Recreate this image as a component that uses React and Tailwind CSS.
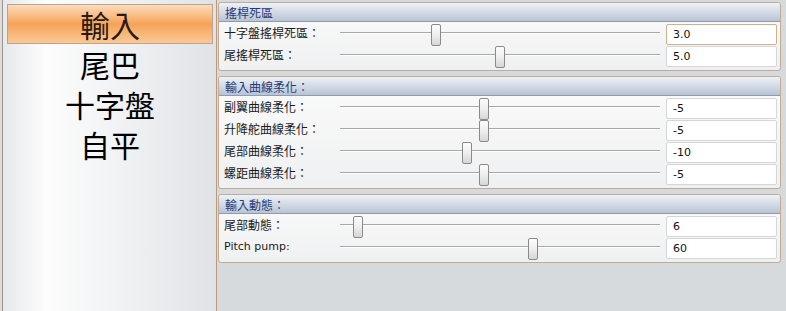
import React from "react";

const cjk = { fontFamily: '"Noto Sans CJK TC", "Noto Sans", sans-serif' };
const latin = { fontFamily: '"DejaVu Sans", "Noto Sans CJK TC", sans-serif' };

function Slider({ pos }) {
  return (
    <div className="relative h-[22px]">
      <div className="absolute left-0 right-0 top-[8px] h-[2px] border-t border-[#a8a8a8] bg-[#ffffff]" />
      <div
        className="absolute top-0 h-[22px] w-[10px] rounded-[2px] border border-[#8a8a8a] bg-gradient-to-b from-[#fdfdfd] via-[#eeeeee] to-[#d6d6d6]"
        style={{ left: pos - 5 }}
      />
    </div>
  );
}

function Row({ label, pos, value, latinLabel, focused }) {
  return (
    <div className="grid h-[22px] grid-cols-[110px_320px_111px] gap-x-[6px] items-start">
      <div
        className="text-[12px] leading-[17px] text-[#1a1a1a] whitespace-nowrap"
        style={latinLabel ? { fontFamily: '"DejaVu Sans", sans-serif', fontSize: 11 } : cjk}
      >
        {label}
      </div>
      <Slider pos={pos} />
      <div
        className={`h-[21px] rounded-[2px] border bg-white pl-[6px] text-[11px] leading-[19px] text-[#111] ${
          focused ? "border-[#cfb08e]" : "border-[#d4d6d9]"
        }`}
        style={latin}
      >
        {value}
      </div>
    </div>
  );
}

function Group({ title, rows }) {
  return (
    <div className="rounded-[3px] border border-[#c3aa92] bg-gradient-to-b from-[#fbfbfb] to-[#eff0f1]">
      <div
        className="h-[19px] rounded-t-[3px] border-b border-[#8e9bb0] bg-gradient-to-b from-[#eef2f7] via-[#d3dbe6] to-[#b9c4d3] pl-[6px] text-[12px] leading-[19px] text-[#1f3b7a]"
        style={cjk}
      >
        {title}
      </div>
      <div className="flex flex-col pl-[5px] pt-[2px] pb-[2px]">
        {rows.map((r, i) => (
          <Row key={i} {...r} />
        ))}
      </div>
    </div>
  );
}

export default function App() {
  const items = ["輸入", "尾巴", "十字盤", "自平"];
  return (
    <div className="flex h-[311px] w-[786px] overflow-hidden bg-[#d6dadd]">
      <div className="flex h-full w-[216px] shrink-0 bg-[#dcdcdc] pl-[2px]">
        <div className="flex h-full flex-1 flex-col border-l border-[#9c9590] bg-gradient-to-r from-[#e6e8ea] via-[#fdfdfd] via-20% to-[#e0e3e6] px-[4px] pt-[4px] pr-[3px]">
          {items.map((t, i) => (
            <div
              key={t}
              className={`flex h-[40px] items-center justify-center text-[30px] leading-none ${
                i === 0
                  ? "border border-[#b9a590] bg-gradient-to-b from-[#fcdcbc] via-[#f5a356] to-[#fbc995] text-[#2a1a10]"
                  : "text-[#000]"
              }`}
              style={cjk}
            >
              {t}
            </div>
          ))}
        </div>
      </div>
      <div className="flex flex-1 flex-col gap-[5px] border-l border-[#b89b80] pl-[1px] pr-[5px] pt-[2px]">
        <Group
          title="搖桿死區"
          rows={[
            { label: "十字盤搖桿死區：", pos: 96, value: "3.0", focused: true },
            { label: "尾搖桿死區：", pos: 160, value: "5.0" },
          ]}
        />
        <Group
          title="輸入曲線柔化："
          rows={[
            { label: "副翼曲線柔化：", pos: 144, value: "-5" },
            { label: "升降舵曲線柔化：", pos: 144, value: "-5" },
            { label: "尾部曲線柔化：", pos: 127, value: "-10" },
            { label: "螺距曲線柔化：", pos: 144, value: "-5" },
          ]}
        />
        <Group
          title="輸入動態："
          rows={[
            { label: "尾部動態：", pos: 18, value: "6" },
            { label: "Pitch pump:", pos: 193, value: "60", latinLabel: true },
          ]}
        />
      </div>
    </div>
  );
}
